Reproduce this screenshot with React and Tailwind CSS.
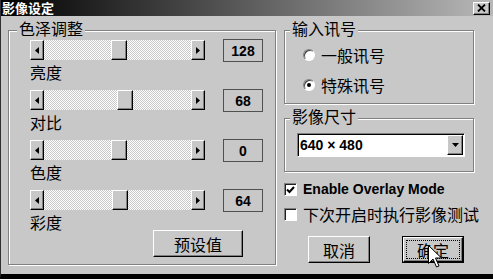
import React from 'react';

const CJK = "font-['Noto_Sans_CJK_SC',sans-serif]";
const LAT = "font-['Liberation_Sans',sans-serif]";

const raised =
    'border border-t-white border-l-white border-r-black border-b-black shadow-[inset_-1px_-1px_0_#808080]';

const sliders = [
    { thumb: 'ml-[67px]', value: '128', label: '亮度' },
    { thumb: 'ml-[73px]', value: '68', label: '对比' },
    { thumb: 'ml-[67px]', value: '0', label: '色度' },
    { thumb: 'ml-[68px]', value: '64', label: '彩度' },
];

const ArrowBtn = ({ dir }) => (
    <div className={`w-[14px] h-[20px] shrink-0 flex items-center justify-center bg-[#c8c8c8] ${raised}`}>
        <svg width="4" height="7" viewBox="0 0 4 7">
            {dir === 'left'
                ? <path d="M4 0V7L0 3.5Z" fill="#000" />
                : <path d="M0 0V7L4 3.5Z" fill="#000" />}
        </svg>
    </div>
);

const Slider = ({ thumb }) => (
    <div className="flex w-[175px] h-[20px] mt-[1px]">
        <ArrowBtn dir="left" />
        <div className="flex-1 flex bg-[image:repeating-conic-gradient(#fff_0_25%,#c8c8c8_0_50%)] bg-[length:2px_2px]">
            <div className={`${thumb} w-[16px] h-[20px] bg-[#c8c8c8] ${raised}`} />
        </div>
        <ArrowBtn dir="right" />
    </div>
);

const GroupLabel = ({ children, className = '' }) => (
    <div className={`-mt-[11px] w-fit px-[2px] bg-[#c8c8c8] text-[16px] leading-[16px] text-black whitespace-nowrap ${className}`}>
        {children}
    </div>
);

const groupBox = 'border border-[#808080] shadow-[inset_1px_1px_0_#fff,1px_1px_0_#fff] flex flex-col';

const Radio = ({ checked }) => (
    <div className="w-[12px] h-[12px] rounded-full border border-t-[#808080] border-l-[#808080] border-r-white border-b-white bg-white shadow-[inset_1px_1px_0_#404040] flex items-center justify-center shrink-0">
        {checked && <div className="w-[4px] h-[4px] rounded-full bg-black" />}
    </div>
);

const Checkbox = ({ checked }) => (
    <div className="w-[13px] h-[13px] mt-[2px] shrink-0 border border-t-[#808080] border-l-[#808080] border-r-white border-b-white bg-white shadow-[inset_1px_1px_0_#202020] flex items-center justify-center">
        {checked && (
            <svg width="9" height="8" viewBox="0 0 9 8">
                <path d="M1 3.5L3.5 6L8 1" stroke="#000" strokeWidth="2" fill="none" />
            </svg>
        )}
    </div>
);

const Button = ({ children, className = '' }) => (
    <div className={`w-[62px] h-[27px] bg-[#c8c8c8] ${raised} flex items-center justify-center text-[16px] leading-[16px] ${className}`}>
        {children}
    </div>
);

export default function App() {
    return (
        <div className={`relative w-[493px] h-[279px] bg-[#c8c8c8] border-l border-l-[#303030] border-b-[5px] border-b-black overflow-hidden ${CJK} text-black`}>
            {/* title bar */}
            <div className="h-[16px] flex items-center justify-between bg-[linear-gradient(to_right,#000,#b8b8b8)]">
                <span className="pl-[1px] text-white font-bold text-[13px] leading-[14px] whitespace-nowrap">影像设定</span>
                <div className={`w-[17px] h-[13px] mr-[3px] bg-[#c8c8c8] ${raised} flex items-center justify-center`}>
                    <svg width="9" height="8" viewBox="0 0 9 8">
                        <path d="M1 0.5L8 7.5M8 0.5L1 7.5" stroke="#000" strokeWidth="1.8" />
                    </svg>
                </div>
            </div>

            <div className="flex pt-[14px] pl-[7px]">
                {/* left group */}
                <div className={`${groupBox} w-[268px] h-[235px] shrink-0`}>
                    <GroupLabel className="ml-[8px]">色泽调整</GroupLabel>
                    <div className="flex flex-col pl-[21px] pr-[12px] mt-[3px]">
                        {sliders.map((s, i) => (
                            <div key={s.label} className={i === 0 ? '' : 'mt-[9px]'}>
                                <div className="flex items-start h-[23px]">
                                    <Slider thumb={s.thumb} />
                                    <div className={`ml-[18px] w-[40px] h-[23px] border border-[#505050] flex items-center justify-center ${LAT} font-bold text-[14px] leading-[16px]`}>
                                        {s.value}
                                    </div>
                                </div>
                                {i < sliders.length - 1 ? (
                                    <div className="mt-[2px] text-[16px] leading-[16px]">{s.label}</div>
                                ) : (
                                    <div className="flex items-start mt-[2px]">
                                        <span className="text-[16px] leading-[16px]">{s.label}</span>
                                        <div className={`ml-auto mr-[20px] mt-[16px] w-[90px] h-[27px] bg-[#c8c8c8] ${raised} flex items-center justify-center text-[16px] leading-[16px]`}>
                                            预设值
                                        </div>
                                    </div>
                                )}
                            </div>
                        ))}
                    </div>
                </div>

                {/* right column */}
                <div className="ml-[8px] w-[190px] shrink-0 flex flex-col">
                    <div className={`${groupBox} h-[74px]`}>
                        <GroupLabel className="ml-[5px]">输入讯号</GroupLabel>
                        <div className="flex items-center mt-[11px] ml-[18px]">
                            <Radio />
                            <span className="ml-[6px] text-[16px] leading-[16px]">一般讯号</span>
                        </div>
                        <div className="flex items-center mt-[14px] ml-[18px]">
                            <Radio checked />
                            <span className="ml-[6px] text-[16px] leading-[16px]">特殊讯号</span>
                        </div>
                    </div>

                    <div className={`${groupBox} h-[54px] mt-[14px]`}>
                        <GroupLabel className="ml-[5px]">影像尺寸</GroupLabel>
                        <div className="mt-[9px] ml-[12px] w-[168px] h-[24px] flex items-center bg-white border border-t-[#808080] border-l-[#808080] border-r-white border-b-white shadow-[inset_1px_1px_0_#000]">
                            <span className={`pl-[2px] ${LAT} font-bold text-[14px] leading-[16px]`}>640 × 480</span>
                            <div className={`ml-auto mr-[1px] w-[16px] h-[20px] bg-[#c8c8c8] ${raised} flex items-center justify-center`}>
                                <svg width="7" height="4" viewBox="0 0 7 4">
                                    <path d="M0 0H7L3.5 4Z" fill="#000" />
                                </svg>
                            </div>
                        </div>
                    </div>

                    <div className="flex items-start mt-[9px]">
                        <Checkbox checked />
                        <span className={`ml-[6px] ${LAT} font-bold text-[14px] leading-[16px] whitespace-nowrap`}>Enable Overlay Mode</span>
                    </div>
                    <div className="flex items-start mt-[9px]">
                        <Checkbox />
                        <span className="ml-[6px] text-[16px] leading-[16px] whitespace-nowrap">下次开启时执行影像测试</span>
                    </div>

                    <div className="flex mt-[14px] ml-[24px]">
                        <Button>取消</Button>
                        <div className="ml-[32px] w-[62px] h-[27px] border border-black flex">
                            <div className={`flex-1 flex bg-[#c8c8c8] ${raised} p-[2px]`}>
                                <div className="flex-1 border border-dotted border-black flex items-center justify-center text-[16px] leading-[16px]">
                                    确定
                                </div>
                            </div>
                        </div>
                    </div>
                </div>
            </div>

            {/* mouse cursor */}
            <svg className="absolute left-[427px] top-[245px]" width="14" height="23" viewBox="0 0 14 23">
                <path d="M0.5 0.5V18.5L5 14L8.5 22L11 21L7.5 13H13.5Z" fill="#fff" stroke="#000" strokeWidth="1" />
            </svg>
        </div>
    );
}
